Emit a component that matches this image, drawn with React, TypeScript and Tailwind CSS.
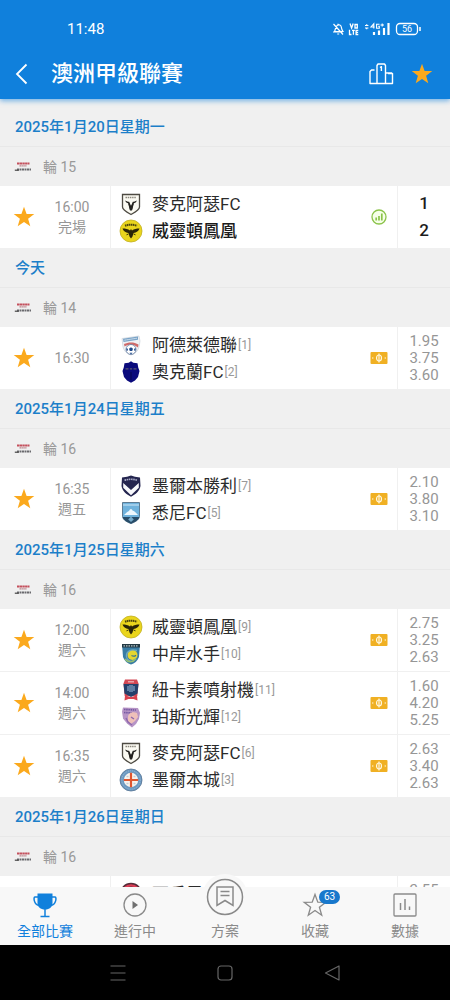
import React from "react";

type LogoName =
  | "macarthur"
  | "wellington"
  | "adelaide"
  | "auckland"
  | "victory"
  | "sydney"
  | "mariners"
  | "newcastle"
  | "perth"
  | "city"
  | "wanderers"
  | "brisbane";

type Team = { name: string; logo: LogoName; rank?: number; winner?: boolean };
type Match = {
  time: string;
  note?: string;
  teams: [Team, Team];
  score?: [number, number];
  odds?: [string, string, string];
};
type Day = { date: string; round: string; matches: Match[] };

const days: Day[] = [
  {
    date: "2025年1月20日星期一",
    round: "輪 15",
    matches: [
      {
        time: "16:00",
        note: "完場",
        teams: [
          { name: "麥克阿瑟FC", logo: "macarthur" },
          { name: "威靈頓鳳凰", logo: "wellington", winner: true },
        ],
        score: [1, 2],
      },
    ],
  },
  {
    date: "今天",
    round: "輪 14",
    matches: [
      {
        time: "16:30",
        teams: [
          { name: "阿德萊德聯", logo: "adelaide", rank: 1 },
          { name: "奧克蘭FC", logo: "auckland", rank: 2 },
        ],
        odds: ["1.95", "3.75", "3.60"],
      },
    ],
  },
  {
    date: "2025年1月24日星期五",
    round: "輪 16",
    matches: [
      {
        time: "16:35",
        note: "週五",
        teams: [
          { name: "墨爾本勝利", logo: "victory", rank: 7 },
          { name: "悉尼FC", logo: "sydney", rank: 5 },
        ],
        odds: ["2.10", "3.80", "3.10"],
      },
    ],
  },
  {
    date: "2025年1月25日星期六",
    round: "輪 16",
    matches: [
      {
        time: "12:00",
        note: "週六",
        teams: [
          { name: "威靈頓鳳凰", logo: "wellington", rank: 9 },
          { name: "中岸水手", logo: "mariners", rank: 10 },
        ],
        odds: ["2.75", "3.25", "2.63"],
      },
      {
        time: "14:00",
        note: "週六",
        teams: [
          { name: "紐卡素噴射機", logo: "newcastle", rank: 11 },
          { name: "珀斯光輝", logo: "perth", rank: 12 },
        ],
        odds: ["1.60", "4.20", "5.25"],
      },
      {
        time: "16:35",
        note: "週六",
        teams: [
          { name: "麥克阿瑟FC", logo: "macarthur", rank: 6 },
          { name: "墨爾本城", logo: "city", rank: 3 },
        ],
        odds: ["2.63", "3.40", "2.63"],
      },
    ],
  },
  {
    date: "2025年1月26日星期日",
    round: "輪 16",
    matches: [
      {
        time: "14:00",
        note: "週日",
        teams: [
          { name: "西悉尼", logo: "wanderers" },
          { name: "布里斯班獅吼", logo: "brisbane" },
        ],
        odds: ["2.55", "3.50", "2.55"],
      },
    ],
  },
];

const logoArt: Record<LogoName, React.ReactNode> = {
  macarthur: (
    <>
      <path d="M3.500 2.500h17v12.500c0 3-4 5-8.500 7.500-4.500-2.500-8.500-4.500-8.500-7.500z" fill="#fbfaf2" stroke="#4d4a42" strokeWidth="1.300" />
      <path d="M6.500 5.500h11" stroke="#8b877d" strokeWidth="1.300" strokeDasharray="1.500 .7" />
      <path d="M6.200 8.500c.6 2 1.600 2.600 3.200 2.800L11 18h2l1.600-6.700c1.600-.2 2.600-.8 3.200-2.800-1.500 1-2.800 1.200-4 1.200L12 14 10.200 9.700c-1.200 0-2.500-.2-4-1.200z" fill="#24221f" />
      <path d="M9 11l2 7.500h2l2-7.500-1.500.8-1.500 3-1.500-3z" fill="#24221f" />
    </>
  ),
  wellington: (
    <>
      <circle cx="12" cy="12" r="11" fill="#ead51c" stroke="#c0ae22" strokeWidth=".8" />
      <path d="M6 6.800Q12 4.500 18 6.800" fill="none" stroke="#4a430c" strokeWidth="2" strokeDasharray="1.500 .5" />
      <path d="M3.500 9.500c3 0 5.500.6 7.500 2L12 10l1 1.500c2-1.400 4.500-2 7.500-2-.8 2.500-3 4.300-6 4.500L13.500 17.500 12 19.500l-1.500-2L9.500 14c-3-.2-5.200-2-6-4.500z" fill="#2a2508" />
      <path d="M7.500 15.800l2-.8M16.500 15.800l-2-.8" stroke="#3a3409" />
    </>
  ),
  adelaide: (
    <>
      <path d="M3 5.500L20 3l1 5-1 6c-1 4-4 7-8 8-4-1-7-4-8-8z" fill="#eef1f5" stroke="#c5ccd6" strokeWidth=".6" />
      <path d="M4 5.800L19 3.500v3.300L4.500 9z" fill="#79a3c7" />
      <path d="M5.500 7.200L18 5.200" stroke="#f2f7fb" strokeDasharray="1.200 .8" />
      <path d="M5 11c4-2 10-2.500 14.500.5l-.5 3c-3-3-9-4-13.500-1z" fill="#cf6a69" />
      <circle cx="12" cy="16.500" r="5" fill="#fff" stroke="#506a94" strokeWidth=".7" />
      <path d="M12 14.300l2 1.500-.8 2.300h-2.400l-.8-2.300zM7.500 15l1.500 1-.5 2-1.200-.8zM16.500 15L15 16l.5 2 1.200-.8zM10.500 19.800h3L12 21.300z" fill="#1f4a8a" />
    </>
  ),
  auckland: (
    <>
      <path d="M12 1.200l2.300 1.600 4.200.5.800 4.500 1.200 3.200-1.500 6-3 3.600-4 2.200-4-2.200-3-3.600-1.500-6 1.200-3.200.8-4.500 4.200-.5z" fill="#0a0a7c" />
      <path d="M6.500 8.800h3M10.800 8.800h2.400M14.500 8.800h3" stroke="#5b5a72" strokeWidth="1.200" />
      <path d="M12 12v8" stroke="#07075c" strokeWidth="1.500" />
    </>
  ),
  victory: (
    <>
      <path d="M12 1.500l4 1.200 5 .8.500 8.500c-.8 5-5 8.500-9.500 10.700C7.500 20.500 3.300 17 2.500 12L3 3.500l5-.8z" fill="#24254f" />
      <path d="M4.200 9L12 16l7.800-7v4.800L12 21.200l-7.800-7.400z" fill="#f7f8fb" />
      <path d="M5.500 6.300Q12 4.300 18.500 6.300" fill="none" stroke="#a9abc7" strokeWidth="1.600" strokeDasharray="1.600 .6" />
    </>
  ),
  sydney: (
    <>
      <path d="M3.500 1.500h17v14c-.5 3.500-4.500 5.500-8.500 7.200-4-1.700-8-3.700-8.500-7.200z" fill="#6fb2dc" stroke="#45637b" strokeWidth=".8" />
      <path d="M4 4h16" stroke="#9fcdea" strokeWidth="2" />
      <path d="M5 14c1.500-1 3-3.500 5-4 1-2.500 2.500-2.800 3.500-.5 2.500.5 4 3 5.500 4.500z" fill="#edf7fd" />
      <path d="M3.700 16h16.600c-.6 3.200-4.300 5-8.300 6.500-4-1.500-7.700-3.300-8.300-6.500z" fill="#284c68" />
      <path d="M12 15.500l2.800 3L12 21l-2.800-2.500z" fill="#75a9c9" />
    </>
  ),
  mariners: (
    <>
      <path d="M3 2h18l-1 13c-1.500 4-4.500 6.500-8 7.500-3.500-1-6.500-3.500-8-7.500z" fill="#387ca5" />
      <path d="M3 2h18v3.500H3z" fill="#233944" />
      <path d="M4.500 3.800h15" stroke="#b7c8c9" strokeWidth="1.300" strokeDasharray="1.500 1" />
      <circle cx="13.500" cy="13" r="5" fill="#e5d62f" />
      <path d="M18 8.500c-6-2-11 1-10.500 6 .3 2.500 2 4 4 4.500" fill="none" stroke="#6fa9bd" strokeWidth="1.400" />
      <path d="M6 17c3 4 8 3.500 11-.5" fill="none" stroke="#93bf74" strokeWidth="1.500" />
      <path d="M12.500 13.500c1.500 1 3 1 4.500-.3" fill="none" stroke="#327292" strokeWidth="1.200" />
    </>
  ),
  newcastle: (
    <>
      <path d="M6 1.500h12l1.500 4-1.200 12.500h-12.600L4.500 5.500z" fill="#d34854" />
      <path d="M4.500 6h15l-1 9.500L12 19l-6.500-3.500z" fill="#24406b" />
      <path d="M9 8v5M11 7v7M13 7v7M15 8v5" stroke="#8fb0d2" strokeWidth="1.100" />
      <path d="M5.500 22.500l.5-5 6 1.500 6-1.500.5 5-4-1.500h-5z" fill="#d8414d" />
      <path d="M9 3.800h6" stroke="#f2b9bd" strokeWidth="1.200" />
    </>
  ),
  perth: (
    <>
      <path d="M4 2.500l15 .5 2 5-1 6-3 5-4 3.500-5-4-4-5-1-7z" fill="#b694c5" />
      <path d="M5 4.500l12 .5M5 7.500l8 .5" stroke="#7558a1" strokeWidth="1.600" strokeDasharray="1.500 .7" />
      <path d="M9 12c0-4 5-6 9-4l1 4-3 4-4 3-3-3z" fill="#eec0b9" />
      <path d="M7 13l2 4 4 3M12 12l3 2" fill="none" stroke="#8d68ad" strokeWidth="1.400" />
    </>
  ),
  city: (
    <>
      <circle cx="12" cy="12" r="11" fill="#6b99c2" stroke="#557291" strokeWidth=".8" />
      <circle cx="12" cy="12" r="9.200" fill="none" stroke="#9dbbd5" strokeWidth="1" strokeDasharray="1 1" />
      <circle cx="12" cy="12" r="7.200" fill="#f8f4ef" />
      <path d="M12 4.800v14.400M4.800 12h14.400" stroke="#e0562f" strokeWidth="2.200" />
      <path d="M7.500 8.500h2M14.500 8.500h2M7.500 15.500h2M14.500 15.500h2" stroke="#c4ccd4" strokeWidth="1.300" />
    </>
  ),
  wanderers: (
    <>
      <circle cx="12" cy="12" r="10.500" fill="#dc3d55" stroke="#542c38" strokeWidth="1.300" />
      <circle cx="12" cy="12" r="7" fill="#e56577" stroke="#542c38" />
      <path d="M6 8h12M5 12h14M6 16h12" stroke="#35262c" strokeWidth="1.500" />
    </>
  ),
  brisbane: (
    <>
      <path d="M4 3h16v12l-8 7-8-7z" fill="#ee7d2b" />
      <path d="M8 7h8v6l-4 4-4-4z" fill="#6b2440" />
    </>
  ),
};

function Star({ className }: { className: string }) {
  return (
    <svg viewBox="0 0 24 24" className={className} aria-hidden="true">
      <path d="M12 1.700l2.600 7.200 7.700.2-6.200 4.700 2.200 7.500-6.300-4.300-6.300 4.300 2.200-7.500L1.700 9.100l7.700-.2z" fill="#fba91d" />
    </svg>
  );
}

function LeagueLogo() {
  return (
    <svg viewBox="0 0 18 12" className="h-3 w-[18px]" aria-hidden="true">
      <path d="M3 2.500h12.500" stroke="#c4505d" strokeWidth="2" strokeDasharray="2.400 .3" />
      <path d="M5.500 4.800h7" stroke="#b9838a" strokeWidth="1.200" strokeDasharray="1.500 .4" />
      <path d="M3 8.500h14" stroke="#6a6a6e" strokeWidth="2" strokeDasharray="2 .5" />
      <path d="M.8 9.200h4" stroke="#444" strokeWidth="1.200" />
    </svg>
  );
}

function StatusBar() {
  return (
    <div className="flex h-12 items-end pr-7 pl-[67px] text-white">
      <span className="flex-1 pb-[7px] text-[15px] leading-6">11:48</span>
      <svg viewBox="0 0 92 16" className="mb-[11px] h-4 w-[92px]" fill="none" stroke="currentColor" aria-hidden="true">
        <path d="M4.500 10.500c1-1.500.5-5 3-6.300C9 3.300 11 4 11.300 6c.3 2.300.5 3 1.700 4.500zM3 11h9.500M7.200 13h2M3.500 3l9.500 10.500M8 2.800v1" strokeWidth="1.200" />
        <path d="M20 2.500l1.600 4.500 1.600-4.500M25 3.500h2.300V7H25zM19.500 8.800v4.700h2M22 9.300h2.800M23.400 9v4.800M28.300 9.300h-2.200v4.200h2.200M26.100 11.400h2" strokeWidth="1.300" />
        <path d="M35 4.500h3.400M36.700 3.300v1.200M35 7h3.400M36.700 7v1.200" strokeWidth="1.200" />
        <path d="M43.800 7.500V2.800L41 6h3.600M49.500 3.200h-2.900v4h2.700V5.300h-1.100M50.500 4h3.500M52.200 2.500v3" strokeWidth="1.100" />
        <path d="M44 14v-3M49 14v-4.500M54 14V7M58.500 14V2" strokeWidth="2.200" />
        <rect x="66.500" y="2.500" width="21" height="11" rx="3.500" strokeWidth="1.300" />
        <path d="M90 6v4" strokeWidth="1.500" />
        <text x="77" y="11.200" fontSize="9" textAnchor="middle" fill="currentColor" stroke="none">56</text>
      </svg>
    </div>
  );
}

function Header() {
  return (
    <header className="relative z-10 shrink-0 bg-[#1080dc] shadow-[0_2px_5px_rgba(16,128,220,0.55)]">
      <StatusBar />
      <div className="flex h-[51px] items-center pr-4 pl-3 text-white">
        <button type="button" aria-label="返回" className="flex h-8 w-[39px] items-center">
          <svg viewBox="0 0 20 24" className="h-6 w-5" fill="none" stroke="currentColor" strokeWidth="1.800" aria-hidden="true">
            <path d="M14.500 2.500L5 12l9.500 9.500" />
          </svg>
        </button>
        <h1 className="flex-1 text-[22px] leading-8 font-medium">澳洲甲級聯賽</h1>
        <button type="button" aria-label="積分榜" className="mr-4">
          <svg viewBox="0 0 26 24" className="h-6 w-[26px]" fill="none" stroke="currentColor" strokeWidth="1.400" strokeLinejoin="round" aria-hidden="true">
            <path d="M9 21.500V3.500l1-1.500h6.500l1 1.500v18M6.500 8H3.500L2 9.500v12h22.500v-10H20M17.500 11H24M12 5.500l1.400-.8V9" />
          </svg>
        </button>
        <button type="button" aria-label="收藏聯賽">
          <Star className="size-6" />
        </button>
      </div>
    </header>
  );
}

function MatchRow({ match }: { match: Match }) {
  return (
    <li className="flex h-[62px] bg-white">
      <div className="flex w-[111px] items-center border-r border-[#f0f0f0]">
        <button type="button" aria-label="收藏比賽" className="flex w-12 justify-center">
          <Star className="size-6" />
        </button>
        <div className="flex w-12 flex-col items-center text-sm leading-5 text-[#969696]">
          <span>{match.time}</span>
          {match.note && <span>{match.note}</span>}
        </div>
      </div>
      <div className="flex min-w-0 flex-1 flex-col justify-center pl-2">
        {match.teams.map((team) => (
          <div key={team.name} className="flex h-[27px] items-center">
            <svg viewBox="0 0 24 24" className="mr-[9px] size-6 shrink-0" aria-hidden="true">
              {logoArt[team.logo]}
            </svg>
            <span
              className={
                team.winner
                  ? "text-[17px] leading-6 font-medium whitespace-nowrap text-[#1c1c1c]"
                  : "text-[17px] leading-6 whitespace-nowrap text-[#2b2b2b]"
              }
            >
              {team.name}
            </span>
            {team.rank && <span className="ml-px text-xs text-[#999]">[{team.rank}]</span>}
          </div>
        ))}
      </div>
      <div className="flex w-9 items-center justify-center">
        {match.score ? (
          <svg viewBox="0 0 16 16" className="size-4" fill="none" stroke="#8bc34a" aria-label="統計">
            <circle cx="8" cy="8" r="7" fill="#f6ffe9" strokeWidth="1.300" />
            <path d="M5.200 11.500V8.500M8 11.500V7M10.800 11.500V4.500" strokeWidth="1.700" />
          </svg>
        ) : (
          <svg viewBox="0 0 18 14" className="h-[14px] w-[18px]" aria-label="賠率">
            <rect x=".5" y="1" width="17" height="12" rx="1" fill="#f0b023" />
            <ellipse cx="9" cy="7" rx="2.500" ry="3" fill="none" stroke="#fff7df" strokeWidth="1.200" />
            <path d="M9 2.500v9" stroke="#fff7df" strokeWidth="1.200" />
            <path d="M2 7l1.200-1.200v2.400zM16 7l-1.200-1.200v2.400z" fill="#fff7df" />
          </svg>
        )}
      </div>
      <div className="flex w-[53px] flex-col items-center justify-center border-l border-[#f0f0f0]">
        {match.score?.map((goals, i) => (
          <span key={i} className="text-[17px] leading-[27px] font-medium text-[#1c1c1c]">{goals}</span>
        ))}
        {match.odds?.map((odd, i) => (
          <span key={i} className="text-[15px] leading-[17px] text-[#969696]">{odd}</span>
        ))}
      </div>
    </li>
  );
}

function BottomTabs() {
  const tab = "flex flex-1 flex-col items-center justify-end gap-[3px] pb-1 text-sm leading-5";
  return (
    <nav className="relative z-10 flex h-[58px] shrink-0 bg-[#f8f8f8] text-[#8a8a8a]">
      <a href="#all" aria-current="page" className={`${tab} text-[#1080dc]`}>
        <svg viewBox="0 0 26 26" className="h-[26px] w-[26px]" fill="none" stroke="currentColor" aria-hidden="true">
          <path d="M5.500 1.500h15v9.500c0 4-3 6.500-7.500 6.500S5.500 15 5.500 11z" fill="currentColor" stroke="none" />
          <path d="M6 5H2.800c-1.500 0-1 7.500 4 8.500M20 5h3.200c1.500 0 1 7.500-4 8.500M13 17v7.500M8.500 24.500h9" strokeWidth="1.500" />
        </svg>
        全部比賽
      </a>
      <a href="#live" className={tab}>
        <svg viewBox="0 0 26 26" className="h-[26px] w-[26px]" fill="none" stroke="currentColor" strokeWidth="1.300" aria-hidden="true">
          <circle cx="13" cy="13" r="11" />
          <path d="M10.500 9l5.500 4-5.500 4z" fill="#707070" stroke="none" />
        </svg>
        進行中
      </a>
      <a href="#plans" className={tab}>
        <span className="-mb-[2px] flex size-[46px] shrink-0 items-center justify-center rounded-full bg-[#f8f8f8]">
          <svg viewBox="0 0 40 40" className="size-10" fill="none" stroke="currentColor" strokeWidth="1.500" aria-hidden="true">
            <circle cx="20" cy="20" r="17.500" />
            <path d="M12 10h16v18.500l-8-5-8 5zM15.500 14.500h9M15.500 18.500h9" />
          </svg>
        </span>
        方案
      </a>
      <a href="#favourites" className={tab}>
        <span className="relative">
          <svg viewBox="0 0 26 26" className="block h-[26px] w-[26px]" fill="none" stroke="currentColor" strokeWidth="1.300" aria-hidden="true">
            <path d="M13 2.500l2.800 7.600 8 .2-6.400 5 2.300 7.900-6.700-4.700-6.700 4.700 2.300-7.900-6.400-5 8-.2z" />
          </svg>
          <span className="absolute -top-[2px] left-[17px] rounded-full bg-[#1878cc] px-[5px] text-[10px] leading-[14px] text-white">63</span>
        </span>
        收藏
      </a>
      <a href="#stats" className={tab}>
        <svg viewBox="0 0 26 26" className="h-[26px] w-[26px]" fill="none" stroke="currentColor" strokeWidth="1.300" aria-hidden="true">
          <rect x="2" y="2" width="22" height="22" rx="1" />
          <path d="M8.500 11v7M13 7v11M17.500 14.500V18" strokeWidth="1.500" />
        </svg>
        數據
      </a>
    </nav>
  );
}

function SystemNav() {
  const icon = "h-6 w-6";
  return (
    <div className="flex h-[55px] shrink-0 items-center justify-center gap-[83px] bg-black text-[#666]">
      <button type="button" aria-label="最近">
        <svg viewBox="0 0 24 24" className={icon} fill="none" stroke="currentColor" strokeWidth="1.200" aria-hidden="true">
          <path d="M4.500 5h15M4.500 12h15M4.500 19h15" />
        </svg>
      </button>
      <button type="button" aria-label="主畫面">
        <svg viewBox="0 0 24 24" className={icon} fill="none" stroke="currentColor" strokeWidth="1.200" aria-hidden="true">
          <rect x="5" y="5" width="14" height="14" rx="3" />
        </svg>
      </button>
      <button type="button" aria-label="返回上一頁">
        <svg viewBox="0 0 24 24" className={icon} fill="none" stroke="currentColor" strokeWidth="1.200" strokeLinejoin="round" aria-hidden="true">
          <path d="M19 5v14L5.500 12z" />
        </svg>
      </button>
    </div>
  );
}

export default function App() {
  return (
    <div
      lang="zh-Hant"
      className="flex h-screen flex-col bg-[#f0f0f0] font-['Roboto','Noto_Sans_CJK_TC',sans-serif]"
    >
      <Header />
      <main className="min-h-0 flex-1 overflow-y-auto pt-2 [scrollbar-width:none]">
        {days.map((day) => (
          <section key={day.date}>
            <h2 className="flex h-10 items-center border-b border-[#e8e8e8] px-[15px] pt-[2px] text-[15px] font-medium text-[#1c7fc9]">
              {day.date}
            </h2>
            <div className="flex h-[39px] items-center gap-[11px] px-[14px] text-sm text-[#999]">
              <LeagueLogo />
              <span>{day.round}</span>
            </div>
            <ul className="flex flex-col gap-px">
              {day.matches.map((match) => (
                <MatchRow key={match.time} match={match} />
              ))}
            </ul>
          </section>
        ))}
      </main>
      <BottomTabs />
      <SystemNav />
    </div>
  );
}
